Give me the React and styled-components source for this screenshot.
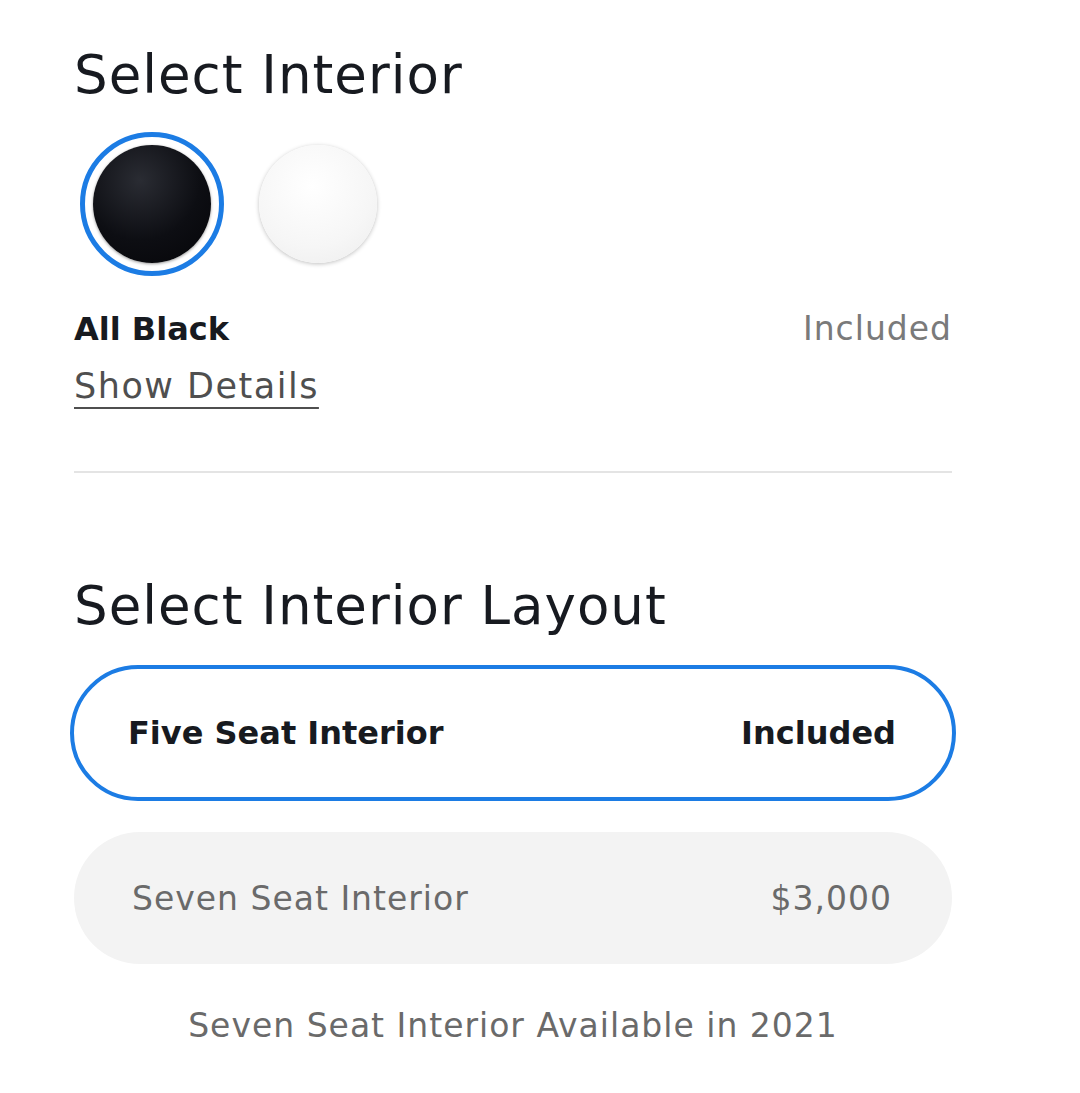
import React, { useState } from 'react';
import styled, { createGlobalStyle } from 'styled-components';

const GlobalStyle = createGlobalStyle`
  body {
    margin: 0;
    background: #ffffff;
    font-family: 'DejaVu Sans', 'Open Sans', Arial, sans-serif;
    color: #171a20;
  }
`;

const Page = styled.div`
  width: 878px;
  padding: 44px 0 0 74px;
`;

const Heading = styled.h2`
  font-size: 53px;
  font-weight: 400;
  letter-spacing: 1px;
  margin: 0;
  line-height: 62px;
  color: #171a20;
`;

const SwatchRow = styled.div`
  display: flex;
  align-items: center;
  gap: 22px;
  margin-top: 26px;
  margin-left: 6px;
`;

const Swatch = styled.button`
  width: 144px;
  height: 144px;
  padding: 0;
  border-radius: 50%;
  border: 5px solid ${(p) => (p.$active ? '#1c7ce4' : 'transparent')};
  background: transparent;
  display: flex;
  align-items: center;
  justify-content: center;
  cursor: pointer;
`;

const SwatchFill = styled.span`
  display: block;
  width: 118px;
  height: 118px;
  border-radius: 50%;
  background: ${(p) => p.$bg};
  box-shadow: ${(p) => p.$shadow};
`;

const InfoRow = styled.div`
  display: flex;
  justify-content: space-between;
  align-items: baseline;
  margin-top: 33px;
  line-height: 40px;
`;

const OptionName = styled.span`
  font-size: 32px;
  font-weight: 700;
  color: #171a20;
`;

const Price = styled.span`
  font-size: 33px;
  letter-spacing: 1px;
  color: #7a7a7a;
`;

const DetailsLink = styled.a`
  display: inline-block;
  margin-top: 17px;
  font-size: 35px;
  line-height: 40px;
  letter-spacing: 1.5px;
  color: #4f4f4f;
  text-decoration: underline;
  text-decoration-thickness: 2px;
  text-underline-offset: 9px;
  cursor: pointer;
`;

const Divider = styled.hr`
  border: 0;
  border-top: 2px solid #e4e4e4;
  margin: 65px 0 0;
`;

const LayoutHeading = styled(Heading)`
  margin-top: 102px;
`;

const LayoutList = styled.div`
  display: flex;
  flex-direction: column;
  gap: 31px;
  margin-top: 28px;
`;

const LayoutOption = styled.button`
  display: flex;
  justify-content: space-between;
  align-items: center;
  width: ${(p) => (p.$active ? '886px' : '878px')};
  height: ${(p) => (p.$active ? '136px' : '132px')};
  margin-left: ${(p) => (p.$active ? '-4px' : '0')};
  padding: 0 56px 0 54px;
  box-sizing: border-box;
  border-radius: 68px;
  border: 4px solid ${(p) => (p.$active ? '#1c7ce4' : 'transparent')};
  background: ${(p) => (p.$active ? '#ffffff' : '#f3f3f3')};
  font-family: inherit;
  font-size: ${(p) => (p.$active ? '32px' : '33px')};
  letter-spacing: ${(p) => (p.$active ? '0' : '1px')};
  font-weight: ${(p) => (p.$active ? 700 : 400)};
  color: ${(p) => (p.$active ? '#171a20' : '#6a6a6a')};
  cursor: pointer;
`;

const Note = styled.p`
  margin: 42px 0 0;
  text-align: center;
  font-size: 33px;
  letter-spacing: 1px;
  color: #6a6a6a;
`;

const layouts = [
  { name: 'Five Seat Interior', price: 'Included' },
  { name: 'Seven Seat Interior', price: '$3,000' },
];

export default function App() {
  const [interior, setInterior] = useState('black');
  const [layout, setLayout] = useState(0);

  return (
    <Page>
      <GlobalStyle />
      <Heading>Select Interior</Heading>
      <SwatchRow>
        <Swatch $active={interior === 'black'} onClick={() => setInterior('black')}>
          <SwatchFill
            $bg="radial-gradient(circle at 40% 30%, #2a2c33 0%, #0d0e13 55%, #050508 100%)"
            $shadow="0 1px 3px rgba(0,0,0,0.4)"
          />
        </Swatch>
        <Swatch $active={interior === 'white'} onClick={() => setInterior('white')}>
          <SwatchFill
            $bg="radial-gradient(circle at 45% 35%, #ffffff 0%, #f6f6f6 60%, #ececec 100%)"
            $shadow="0 1px 4px rgba(0,0,0,0.25)"
          />
        </Swatch>
      </SwatchRow>
      <InfoRow>
        <OptionName>{interior === 'black' ? 'All Black' : 'Black and White'}</OptionName>
        <Price>Included</Price>
      </InfoRow>
      <DetailsLink>Show Details</DetailsLink>
      <Divider />
      <LayoutHeading>Select Interior Layout</LayoutHeading>
      <LayoutList>
        {layouts.map((l, i) => (
          <LayoutOption key={l.name} $active={layout === i} onClick={() => setLayout(i)}>
            <span>{l.name}</span>
            <span>{l.price}</span>
          </LayoutOption>
        ))}
      </LayoutList>
      <Note>Seven Seat Interior Available in 2021</Note>
    </Page>
  );
}
